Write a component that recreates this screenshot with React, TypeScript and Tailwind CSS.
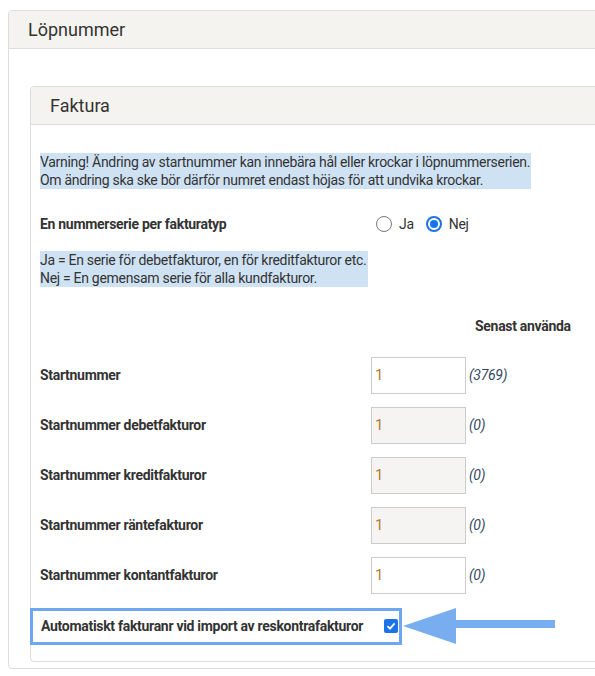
import React from "react";

const rows = [
  { label: "Startnummer", last: "(3769)", disabled: false },
  { label: "Startnummer debetfakturor", last: "(0)", disabled: true },
  { label: "Startnummer kreditfakturor", last: "(0)", disabled: true },
  { label: "Startnummer räntefakturor", last: "(0)", disabled: true },
  { label: "Startnummer kontantfakturor", last: "(0)", disabled: false },
];

const App = () => {
  return (
    <div className="w-[595px] h-[676px] bg-white overflow-hidden pt-[10px] pl-[8px] font-['Roboto',sans-serif] text-[#333]">
      {/* Löpnummer panel */}
      <div className="w-[600px] h-[659px] border border-[#ddd] rounded-[4px] bg-white">
        <div className="h-[38px] bg-[#f5f3ef] border-b border-[#ddd] rounded-t-[4px] pl-[19px] flex items-center text-[18px] text-[#333]">
          Löpnummer
        </div>

        <div className="pt-[37px] pl-[21px]">
          {/* Faktura panel */}
          <div className="w-[580px] h-[576px] border border-[#ddd] rounded-[4px]">
            <div className="h-[38px] bg-[#f5f3ef] border-b border-[#ddd] rounded-t-[4px] pl-[19px] flex items-center text-[18px] text-[#333]">
              Faktura
            </div>

            <div className="pl-[9px] pt-[28px] text-[14px] tracking-[-0.3px]">
              <div className="inline-block bg-[#cfe2f3] leading-[18px] py-0 pr-[1px]">
                Varning! Ändring av startnummer kan innebära hål eller krockar i löpnummerserien.
                <br />
                Om ändring ska ske bör därför numret endast höjas för att undvika krockar.
              </div>

              <div className="flex items-center mt-[23px] h-[20px]">
                <div className="w-[336px] font-bold">En nummerserie per fakturatyp</div>
                <label className="flex items-center gap-[7px]">
                  <span className="w-[16px] h-[16px] rounded-full border border-[#767676] bg-white" />
                  <span>Ja</span>
                </label>
                <label className="flex items-center gap-[7px] ml-[12px]">
                  <span className="w-[16px] h-[16px] rounded-full border-2 border-[#1a73e8] flex items-center justify-center">
                    <span className="w-[8px] h-[8px] rounded-full bg-[#1a73e8]" />
                  </span>
                  <span>Nej</span>
                </label>
              </div>

              <div className="inline-block bg-[#cfe2f3] leading-[18px] mt-[17px] pr-[2px]">
                Ja = En serie för debetfakturor, en för kreditfakturor etc.
                <br />
                Nej = En gemensam serie för alla kundfakturor.
              </div>

              <div className="pl-[435px] mt-[27px] font-bold h-[20px] leading-[20px]">Senast använda</div>

              <div className="mt-[21px] flex flex-col gap-[13px]">
                {rows.map((r) => (
                  <div key={r.label} className="flex items-center h-[37px]">
                    <div className="w-[331px] font-bold">{r.label}</div>
                    <div
                      className={
                        r.disabled
                          ? "w-[95px] h-[37px] border border-[#ccc] bg-[#f5f4f2] flex items-center pl-[3px] text-[#b07b30] text-[15px]"
                          : "w-[95px] h-[37px] border border-[#ccc] bg-white flex items-center pl-[3px] text-[#b07b30] text-[15px]"
                      }
                    >
                      1
                    </div>
                    <div className="ml-[3px] italic text-[#34495e]">{r.last}</div>
                  </div>
                ))}
              </div>

              {/* Highlighted checkbox row */}
              <div className="flex items-center mt-[13px] -ml-[10px]">
                <div className="w-[372px] h-[37px] border-[3px] border-[#6ea6ef] flex items-center pl-[8px]">
                  <span className="font-bold w-[343px]">Automatiskt fakturanr vid import av reskontrafakturor</span>
                  <span className="w-[14px] h-[14px] rounded-[2px] bg-[#1a73e8] flex items-center justify-center">
                    <svg width="10" height="10" viewBox="0 0 10 10">
                      <path d="M1.5 5.2 L4 7.6 L8.6 2.4" stroke="white" strokeWidth="1.8" fill="none" />
                    </svg>
                  </span>
                </div>
                <svg width="153" height="38" viewBox="0 0 153 38" className="ml-[1px]">
                  <polygon points="0,19 53,1 53,13 152,13 152,21 53,21 53,37" fill="#78aef0" />
                </svg>
              </div>
            </div>
          </div>
        </div>
      </div>
    </div>
  );
};

export default App;
